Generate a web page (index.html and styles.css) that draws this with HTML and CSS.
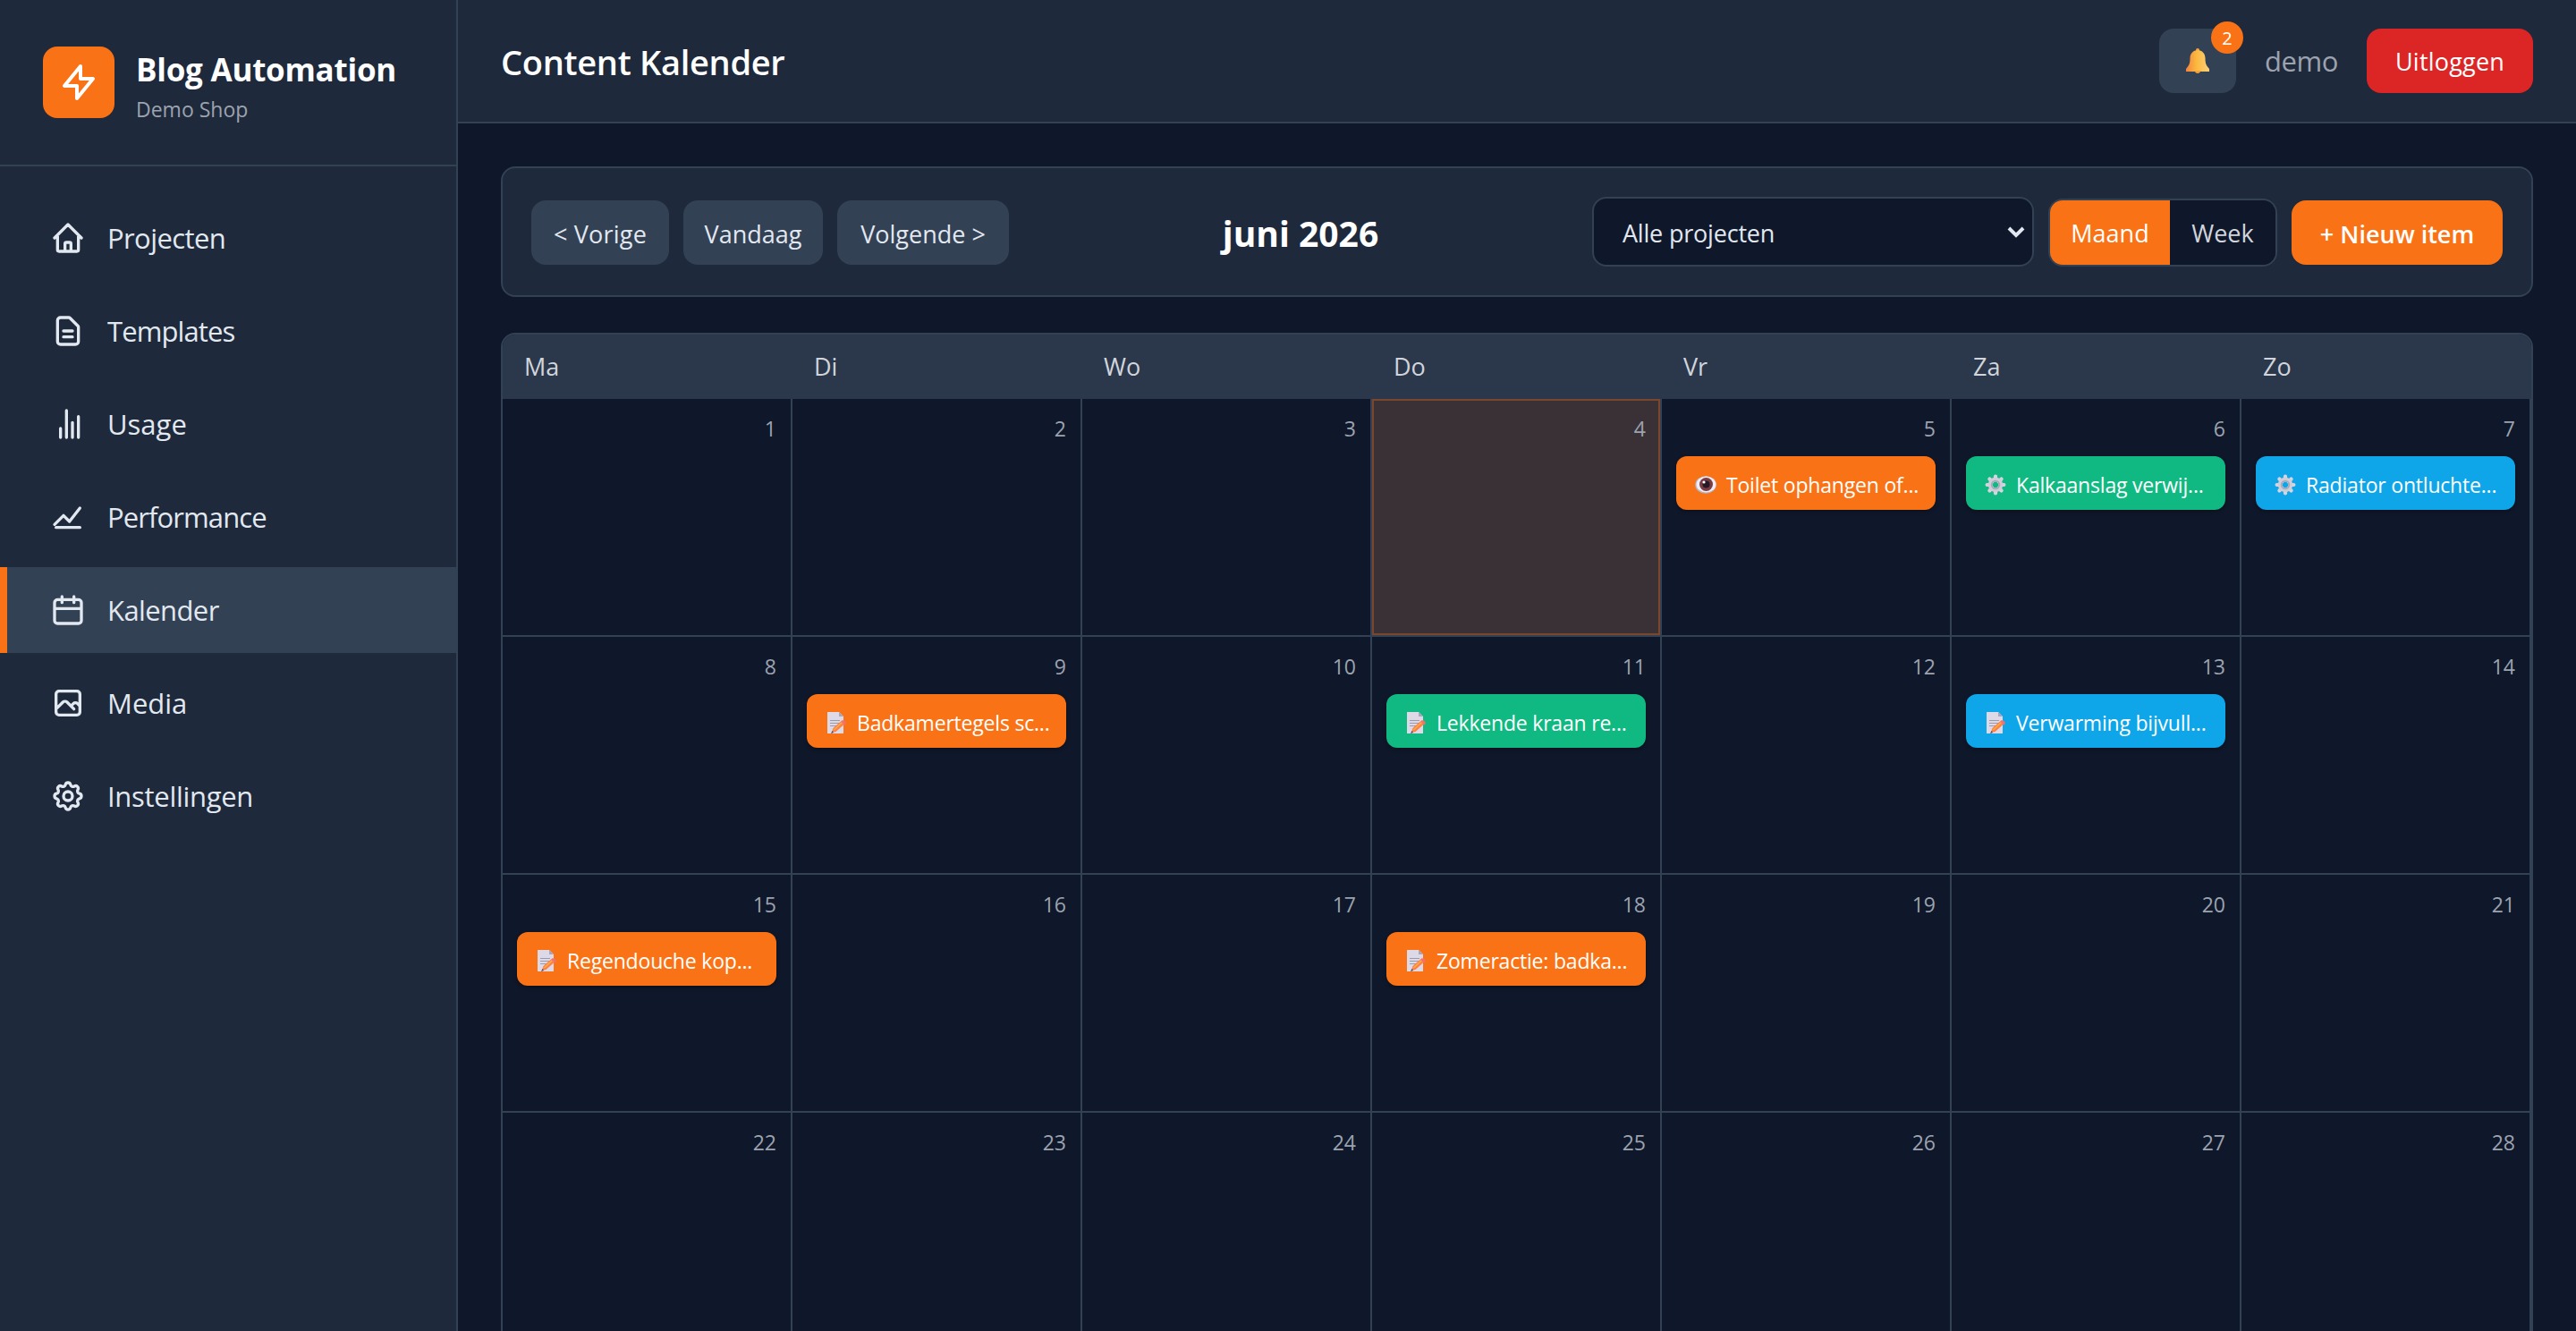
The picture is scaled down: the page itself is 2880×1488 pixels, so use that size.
FILE: index.html
```html
<!DOCTYPE html>
<html lang="nl">
<head>
    <meta charset="UTF-8">
    <meta name="viewport" content="width=device-width, initial-scale=1.0">
    <title>Content Kalender</title>
    <link rel="stylesheet" href="styles.css">
</head>
<body>
    <!-- gedeelde iconen voor de items -->
    <svg class="sprite" aria-hidden="true">
        <symbol id="note" viewBox="0 0 24 24">
            <path d="M2 0h13l5 5v19H2z" fill="#ddd9e6"/>
            <path d="M15 0l5 5h-5z" fill="#a9a6bb"/>
            <path d="M5 9.5h11M5 12.5h10M5 15.5h8" stroke="#9b9bb0" stroke-width="1.2"/>
            <path d="M7 23l1.500-5L17 10.500l3.500 3.500-9 8z" fill="#ff7f45"/>
            <path d="M9.500 20L18 12" stroke="#ffb43f" stroke-width="1.300"/>
            <path d="M17 10.500l1.500-1.200q4.500 0 4 4l-1.500 1.500z" fill="#f4706a"/>
            <path d="M6 24l1.500-3 1.500 2z" fill="#4b4560"/>
        </symbol>
        <symbol id="gear" viewBox="0 0 24 24">
            <g stroke="#d6d4df" stroke-width="4.200" stroke-linecap="round">
                <path d="M12 2.600v4M12 17.400v4M2.600 12h4M17.400 12h4"/>
                <path d="M5.400 5.400l3 3M15.600 15.600l3 3M18.600 5.400l-3 3M8.400 15.600l-3 3"/>
            </g>
            <circle cx="12" cy="12" r="6" fill="none" stroke="#cfcdda" stroke-width="4.500"/>
            <circle cx="12" cy="12" r="4.300" fill="none" stroke="#a3abb9" stroke-width="1.800"/>
        </symbol>
        <symbol id="eye" viewBox="0 0 24 24">
            <ellipse cx="12" cy="12" rx="11.800" ry="9.800" fill="#b5b3c0"/>
            <ellipse cx="12.500" cy="11.500" rx="11" ry="9" fill="#efedf3"/>
            <circle cx="12.500" cy="11.500" r="7.500" fill="#7a3b46"/>
            <circle cx="12.500" cy="11.500" r="4" fill="#241a24"/>
            <circle cx="10" cy="9" r="1.600" fill="#fff"/>
        </symbol>
    </svg>

    <div class="app">
        <aside class="sidebar">
            <div class="brand">
                <div class="logo">
                    <svg viewBox="0 0 24 24"><path d="M13 10V3L4 14h7v7l9-11h-7z"/></svg>
                </div>
                <div class="brand-text">
                    <h1 class="brand-name">Blog Automation</h1>
                    <p class="brand-sub">Demo Shop</p>
                </div>
            </div>
            <nav class="nav">
                <a class="nav-item">
                    <svg viewBox="0 0 24 24"><path d="M3 12l9-9 9 9M5 10v10a1 1 0 001 1h12a1 1 0 001-1V10M10 21v-5a1 1 0 011-1h2a1 1 0 011 1v5"/></svg>
                    <span>Projecten</span>
                </a>
                <a class="nav-item">
                    <svg viewBox="0 0 24 24"><path d="M9 12h6m-6 4h6m2 5H7a2 2 0 01-2-2V5a2 2 0 012-2h5.586a1 1 0 01.707.293l5.414 5.414a1 1 0 01.293.707V19a2 2 0 01-2 2z"/></svg>
                    <span>Templates</span>
                </a>
                <a class="nav-item">
                    <svg viewBox="0 0 24 24"><path d="M7 21v-6M11 21V3M15 21V11M19 21V7"/></svg>
                    <span>Usage</span>
                </a>
                <a class="nav-item">
                    <svg viewBox="0 0 24 24"><path d="M3 17l6-6 4 4 7-9M4 19h16"/></svg>
                    <span>Performance</span>
                </a>
                <a class="nav-item active">
                    <svg viewBox="0 0 24 24"><path d="M8 3v4m8-4v4M3 11h18M5 5h14a2 2 0 012 2v12a2 2 0 01-2 2H5a2 2 0 01-2-2V7a2 2 0 012-2z"/></svg>
                    <span>Kalender</span>
                </a>
                <a class="nav-item">
                    <svg viewBox="0 0 24 24"><path d="M4 16l4.586-4.586a2 2 0 012.828 0L16 16m-2-2l1.586-1.586a2 2 0 012.828 0L20 14M6 20h12a2 2 0 002-2V6a2 2 0 00-2-2H6a2 2 0 00-2 2v12a2 2 0 002 2z"/></svg>
                    <span>Media</span>
                </a>
                <a class="nav-item">
                    <svg viewBox="0 0 24 24"><path d="M10.325 4.317c.426-1.756 2.924-1.756 3.350 0a1.724 1.724 0 002.573 1.066c1.543-.940 3.310.826 2.370 2.370a1.724 1.724 0 001.065 2.572c1.756.426 1.756 2.924 0 3.350a1.724 1.724 0 00-1.066 2.573c.940 1.543-.826 3.310-2.370 2.370a1.724 1.724 0 00-2.572 1.065c-.426 1.756-2.924 1.756-3.350 0a1.724 1.724 0 00-2.573-1.066c-1.543.940-3.310-.826-2.370-2.370a1.724 1.724 0 00-1.065-2.572c-1.756-.426-1.756-2.924 0-3.350a1.724 1.724 0 001.066-2.573c-.940-1.543.826-3.310 2.370-2.370.996.608 2.296.070 2.572-1.065z"/><circle cx="12" cy="12" r="3"/></svg>
                    <span>Instellingen</span>
                </a>
            </nav>
        </aside>

        <div class="main">
            <header class="topbar">
                <h2 class="page-title">Content Kalender</h2>
                <div class="user">
                    <button class="bell">
                        <svg viewBox="0 0 26 28">
                            <defs>
                                <linearGradient id="bell-fill"><stop offset="0" stop-color="#f4823f"/><stop offset=".45" stop-color="#fbb93f"/><stop offset="1" stop-color="#fdd079"/></linearGradient>
                            </defs>
                            <circle cx="13" cy="2" r="2" fill="#f9a13c"/>
                            <path d="M13 2C8 2 4.500 6 4.500 11c0 6-1 8-4.500 12v3h26v-3c-3.500-4-4.500-6-4.500-12 0-5-3.500-9-8.500-9z" fill="url(#bell-fill)"/>
                            <path d="M9.500 25h7q-1 3-3.500 3t-3.500-3z" fill="#f9a03b"/>
                        </svg>
                        <span class="badge">2</span>
                    </button>
                    <span class="username">demo</span>
                    <button class="btn logout">Uitloggen</button>
                </div>
            </header>

            <main class="content">
                <section class="toolbar">
                    <div class="group">
                        <button class="btn prev">&lt; Vorige</button>
                        <button class="btn today">Vandaag</button>
                        <button class="btn next">Volgende &gt;</button>
                    </div>
                    <h3 class="month">juni 2026</h3>
                    <div class="group">
                        <div class="select">
                            <span>Alle projecten</span>
                            <svg viewBox="0 0 20 16"><path d="M2 3l8 8 8-8"/></svg>
                        </div>
                        <div class="toggle">
                            <button class="on">Maand</button>
                            <button>Week</button>
                        </div>
                        <button class="btn new">+ Nieuw item</button>
                    </div>
                </section>

                <section class="calendar">
                    <div class="weekdays">
                        <div>Ma</div><div>Di</div><div>Wo</div><div>Do</div><div>Vr</div><div>Za</div><div>Zo</div>
                    </div>
                    <div class="days" id="days"></div>
                </section>
            </main>
        </div>
    </div>

    <script>
        // geplande items per dag
        const items = {
            5: ['orange', 'eye', 'Toilet ophangen of...'],
            6: ['green', 'gear', 'Kalkaanslag verwij...'],
            7: ['blue', 'gear', 'Radiator ontluchte...'],
            9: ['orange', 'note', 'Badkamertegels sc...'],
            11: ['green', 'note', 'Lekkende kraan re...'],
            13: ['blue', 'note', 'Verwarming bijvull...'],
            15: ['orange', 'note', 'Regendouche kop...'],
            18: ['orange', 'note', 'Zomeractie: badka...']
        };
        const today = 4;
        let html = '';
        for (let d = 1; d <= 28; d++) {
            html += `<div class="day${d === today ? ' is-today' : ''}"><span class="num">${d}</span>`;
            if (items[d]) {
                const [color, icon, text] = items[d];
                html += `<div class="item ${color}"><svg><use href="#${icon}"/></svg><span>${text}</span></div>`;
            }
            html += '</div>';
        }
        document.getElementById('days').innerHTML = html;
    </script>
</body>
</html>
```
FILE: styles.css
```css
* {
    margin: 0;
    padding: 0;
    box-sizing: border-box;
}

body {
    height: 1488px;
    overflow: hidden;
    background: #0f172a;
    color: #e2e8f0;
    font-family: "Segoe UI", "Open Sans", "Noto Sans", sans-serif;
    font-size: 27px;
}

button {
    border: none;
    color: inherit;
    font: inherit;
    letter-spacing: inherit;
}

.sprite {
    display: none;
}

.app {
    display: flex;
    height: 1488px;
    overflow: hidden;
}

/* sidebar */
.sidebar {
    width: 512px;
    flex-shrink: 0;
    background: #1e293b;
    border-right: 2px solid #334155;
}

.brand {
    display: flex;
    align-items: center;
    gap: 24px;
    height: 186px;
    padding: 0 48px;
    border-bottom: 2px solid #334155;
}

.logo {
    display: flex;
    align-items: center;
    justify-content: center;
    width: 80px;
    height: 80px;
    border-radius: 16px;
    background: #f97316;
}

.logo svg {
    width: 48px;
    height: 48px;
    stroke: #fff;
}

.logo svg,
.nav-item svg,
.select svg {
    fill: none;
    stroke-width: 2;
    stroke-linecap: round;
    stroke-linejoin: round;
}

.brand-text {
    padding-top: 3px;
}

.brand-name {
    color: #fff;
    font-size: 35px;
    font-weight: 700;
    line-height: 56px;
    letter-spacing: -0.25px;
    white-space: nowrap;
}

.brand-sub {
    color: #9ca3af;
    font-size: 23px;
    line-height: 32px;
}

.nav {
    display: flex;
    flex-direction: column;
    gap: 8px;
    padding-top: 32px;
}

.nav-item {
    display: flex;
    align-items: center;
    gap: 24px;
    height: 96px;
    padding-left: 48px;
    border-left: 8px solid transparent;
    font-size: 31px;
    letter-spacing: -0.6px;
}

.nav-item:nth-child(2),
.nav-item:nth-child(4) {
    letter-spacing: -0.9px;
}

.nav-item:nth-child(3),
.nav-item:nth-child(6) {
    letter-spacing: 0;
}

.nav-item:nth-child(7) {
    letter-spacing: -0.3px;
}

.nav-item svg {
    width: 40px;
    height: 40px;
    stroke: #e2e8f0;
}

.nav-item.active {
    background: #334155;
    border-left-color: #f97316;
}

/* main */
.main {
    flex: 1;
    min-width: 0;
}

.topbar {
    display: flex;
    align-items: center;
    justify-content: space-between;
    height: 138px;
    padding: 0 48px;
    background: #1e293b;
    border-bottom: 2px solid #334155;
}

.page-title {
    padding-top: 2px;
    color: #fff;
    font-size: 38px;
    font-weight: 600;
    letter-spacing: -0.3px;
}

.user {
    display: flex;
    align-items: center;
    gap: 32px;
}

.bell {
    position: relative;
    display: flex;
    align-items: center;
    justify-content: center;
    width: 86px;
    height: 72px;
    border-radius: 16px;
    background: #334155;
}

.bell svg {
    width: 26px;
    height: 28px;
}

.badge {
    position: absolute;
    top: -8px;
    right: -8px;
    width: 36px;
    height: 36px;
    border-radius: 50%;
    background: #f97316;
    color: #fff;
    font-size: 20px;
    line-height: 37px;
    text-align: center;
}

.username {
    width: 82px;
    color: #9ca3af;
    font-size: 31px;
    letter-spacing: -0.4px;
}

.btn {
    height: 72px;
    padding-top: 2px;
    border-radius: 16px;
    background: #334155;
    text-align: center;
    white-space: nowrap;
}

.logout {
    width: 186px;
    padding-top: 0;
    background: #dc2626;
    color: #fff;
    letter-spacing: 0.2px;
}

.content {
    display: flex;
    flex-direction: column;
    gap: 40px;
    padding: 48px;
}

.toolbar {
    display: flex;
    align-items: center;
    justify-content: space-between;
    height: 146px;
    padding: 0 32px;
    border: 2px solid #334155;
    border-radius: 16px;
    background: #1e293b;
}

.group {
    display: flex;
    align-items: center;
    gap: 16px;
}

/* knoppen staan 1px lager dan het midden */
.toolbar .btn {
    margin-top: 2px;
}

.prev {
    width: 154px;
    letter-spacing: 0.2px;
}

.today {
    width: 156px;
}

.next {
    width: 192px;
}

.month {
    padding-top: 3px;
    color: #fff;
    font-size: 39px;
    font-weight: 700;
}

.select {
    display: flex;
    align-items: center;
    justify-content: space-between;
    width: 494px;
    height: 78px;
    padding: 2px 8px 0 32px;
    border: 2px solid #334155;
    border-radius: 16px;
    background: #0f172a;
    letter-spacing: -0.2px;
}

.select svg {
    width: 20px;
    height: 16px;
    stroke: #e2e8f0;
    stroke-width: 4;
    stroke-linecap: butt;
    stroke-linejoin: miter;
}

.toggle {
    display: flex;
    height: 76px;
    margin-top: 2px;
    border: 2px solid #334155;
    border-radius: 16px;
    overflow: hidden;
}

.toggle button {
    width: 118px;
    padding-top: 1px;
    background: #0f172a;
    color: #d1d5db;
}

.toggle .on {
    width: 134px;
    background: #f97316;
    color: #fff;
}

.btn.new {
    width: 236px;
    background: #f97316;
    color: #fff;
    font-weight: 600;
}

/* kalender */
.calendar {
    border: 2px solid #334155;
    border-radius: 16px;
    overflow: hidden;
}

.weekdays {
    display: grid;
    grid-template-columns: repeat(7, 1fr);
    height: 72px;
    background: #2b384c;
    color: #d1d5db;
    line-height: 72px;
}

.weekdays div {
    padding-left: 24px;
}

.days {
    display: grid;
    grid-template-columns: repeat(7, 1fr);
    grid-auto-rows: 266px;
}

.day {
    min-width: 0;
    padding: 16px;
    border-right: 2px solid #334155;
    border-bottom: 2px solid #334155;
}

.is-today {
    background: #3a3136 padding-box;
    box-shadow: inset 0 0 0 2px #7b462c;
}

.num {
    display: block;
    color: #9ca3af;
    font-size: 23px;
    line-height: 34px;
    text-align: right;
}

.item {
    display: flex;
    align-items: center;
    gap: 10px;
    height: 60px;
    margin-top: 14px;
    padding: 3px 20px 0;
    border-radius: 12px;
    color: #fff;
    font-size: 23px;
    letter-spacing: -0.2px;
    white-space: nowrap;
    box-shadow: 0 2px 4px rgba(0, 0, 0, 0.3);
}

.item svg {
    width: 26px;
    height: 24px;
    flex-shrink: 0;
}

.orange {
    background: #f97316;
}

.green {
    background: #10b981;
}

.blue {
    background: #0ea5e9;
}
```
